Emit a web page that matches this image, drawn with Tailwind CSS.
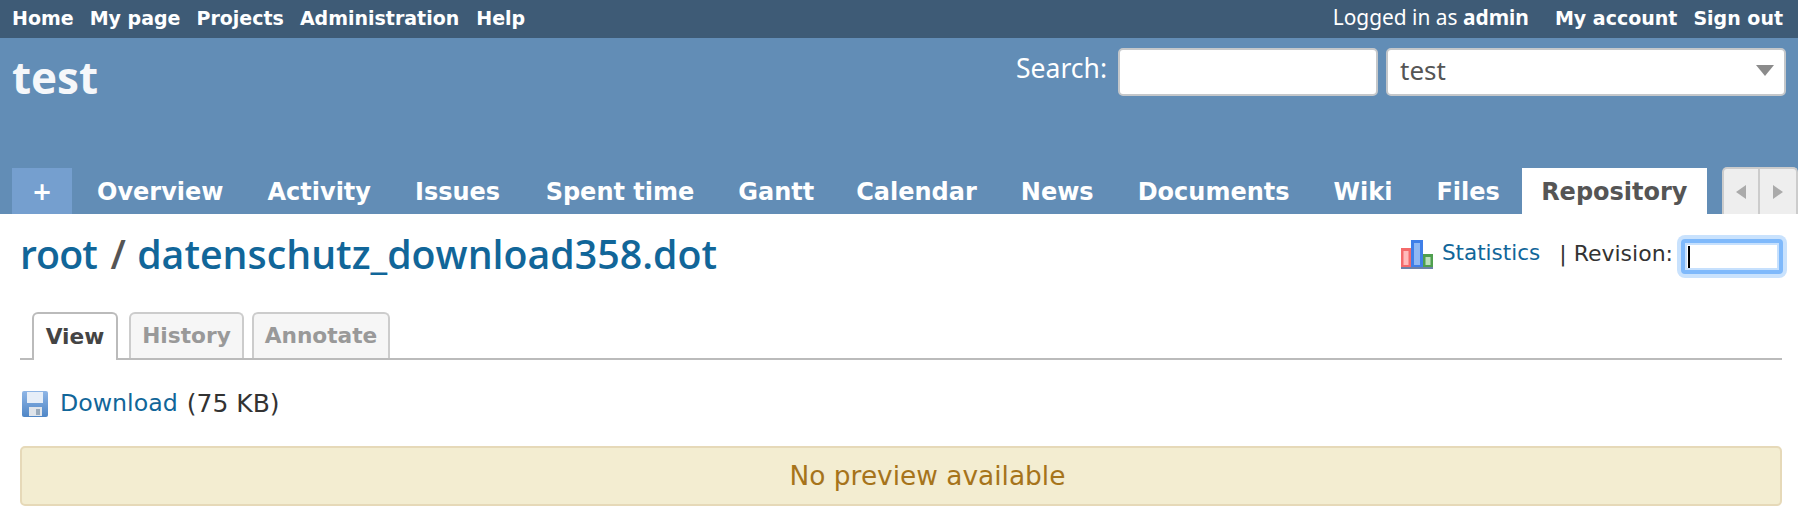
<!DOCTYPE html>
<html><head><meta charset="utf-8"><script src="https://cdn.jsdelivr.net/npm/@tailwindcss/browser@4"></script></head>
<body class="bg-white font-['DejaVu_Sans',sans-serif] overflow-hidden">
<div class="w-[1798px] h-[524px] flex flex-col overflow-hidden">
  <div class="h-[38px] bg-[#3e5b76] text-white flex items-center justify-between pl-[12px] pr-[15px] pb-[2px] text-[19px] font-bold">
    <div class="flex gap-[16px]"><span>Home</span><span>My page</span><span>Projects</span><span>Administration</span><span class="ml-[1px]">Help</span></div>
    <div class="flex items-center"><span class="font-['Noto_Sans',sans-serif] font-normal text-[20.9px] mr-[26px]">Logged in as <b>admin</b></span><span class="mr-[16px]">My account</span><span>Sign out</span></div>
  </div>
  <div class="h-[176px] bg-[#628db6] flex flex-col justify-between relative">
    <div class="flex justify-between items-start pl-[12px] pr-[12px] pt-[10px]">
      <div class="font-['Open_Sans',sans-serif] font-bold text-[44px] leading-[52px] text-[#f5f7fa] pt-[3px]">test</div>
      <div class="flex items-center">
        <span class="font-['Noto_Sans',sans-serif] text-[26.5px] text-white mr-[11px] mb-[6px]">Search:</span>
        <div class="w-[260px] h-[48px] bg-white rounded-[5px] border-2 border-[#c4c7ca] mr-[8px]"></div>
        <div class="w-[400px] h-[48px] bg-white rounded-[5px] border-2 border-[#c4c7ca] flex items-center justify-between pl-[12px] pr-[9px] font-['Noto_Sans',sans-serif] text-[26px] text-[#555]"><span class="mb-[3px]">test</span>
          <svg width="20" height="13" viewBox="0 0 20 13" class="mb-[3px]"><path d="M1 1H19L10 12Z" fill="#8b8b8b"/></svg>
        </div>
      </div>
    </div>
    <div class="flex items-end pl-[12px] h-[48px] font-bold text-[24px] text-white whitespace-nowrap">
      <div class="w-[60px] shrink-0 h-[46px] bg-[#759fcf] flex items-center justify-center mr-[3px] pt-[2px]">+</div>
      <div class="h-[46px] shrink-0 flex items-center px-[22px] pt-[2px]">Overview</div>
      <div class="h-[46px] shrink-0 flex items-center px-[22px] pt-[2px]">Activity</div>
      <div class="h-[46px] shrink-0 flex items-center pl-[22px] pr-[23.5px] pt-[2px]">Issues</div>
      <div class="h-[46px] shrink-0 flex items-center px-[22px] pt-[2px]">Spent time</div>
      <div class="h-[46px] shrink-0 flex items-center pl-[22px] pr-[20px] pt-[2px]">Gantt</div>
      <div class="h-[46px] shrink-0 flex items-center px-[22px] pt-[2px]">Calendar</div>
      <div class="h-[46px] shrink-0 flex items-center px-[22px] pt-[2px]">News</div>
      <div class="h-[46px] shrink-0 flex items-center px-[22px] pt-[2px]">Documents</div>
      <div class="h-[46px] shrink-0 flex items-center px-[22px] pt-[2px]">Wiki</div>
      <div class="h-[46px] shrink-0 flex items-center px-[22px] pt-[2px]">Files</div>
      <div class="h-[46px] w-[185px] shrink-0 flex items-center justify-center bg-white text-[#555] pt-[2px]">Repository</div>
      <div class="ml-[15px] w-[76px] shrink-0 h-[47px] flex border-2 border-b-0 border-[#ccc] rounded-t-[5px] bg-[#eee]">
        <div class="w-[36px] flex items-center justify-center border-r-2 border-[#ccc]"><svg width="12" height="16" viewBox="0 0 12 16"><path d="M11 1V15L1 8Z" fill="#aaa"/></svg></div>
        <div class="flex-1 flex items-center justify-center"><svg width="12" height="16" viewBox="0 0 12 16"><path d="M1 1V15L11 8Z" fill="#aaa"/></svg></div>
      </div>
    </div>
  </div>
  <div class="flex-1 pl-[20px] pr-[16px] text-[23.7px] text-[#333]">
    <div class="h-[60px] pt-[14px] flex justify-between items-start">
      <div class="font-['Open_Sans',sans-serif] font-semibold text-[39.3px] leading-[52px] text-[#555]"><span class="text-[#169] tracking-[-0.9px]">root</span><span class="ml-[3.5px]"> / </span><span class="text-[#169] ml-[1px]">datenschutz_download358.dot</span></div>
      <div class="flex items-center pt-[9px] text-[21.5px]">
        <svg width="34" height="32" viewBox="0 0 34 32" class="mr-[8px] mb-[5px]"><rect x="1" y="10" width="10" height="19" fill="#f46a6a"/><rect x="3.5" y="13" width="5" height="14" fill="#fbb"/><rect x="11" y="2" width="12" height="27" fill="#3f7fe8"/><rect x="14" y="5" width="6" height="22" fill="#8fb8f4"/><rect x="23" y="16" width="10" height="13" fill="#4f9f4f"/><rect x="25.5" y="19" width="5" height="8" fill="#bde0bd"/><rect x="1" y="29" width="32" height="2" fill="#6c82a8"/></svg>
        <a class="text-[#169] mr-[19px] mb-[6px]">Statistics</a><span class="text-[#333] text-[22px] mb-[6px]">| Revision:</span>
        <div class="ml-[8px] mr-[-1px] w-[102px] h-[35px] border-[4px] border-[#7fb9fb] ring-[4px] ring-[#c9e2fd] rounded-[4px] bg-white flex items-center pl-[3px] shadow-[inset_0_0_0_2px_#c6e0fd]"><div class="w-[2px] h-[22px] bg-black"></div></div>
      </div>
    </div>
    <div class="mt-[38px] h-[48px] border-b-2 border-[#bbb] flex items-end pl-[12px] font-bold text-[21.7px] text-[#999]">
      <div class="w-[86px] h-[48px] mb-[-2px] mr-[11px] border-2 border-b-0 border-[#bbb] rounded-t-[6px] bg-white text-[#444] flex items-center justify-center">View</div>
      <div class="w-[115px] h-[46px] mr-[8px] border-2 border-b-0 border-[#ccc] rounded-t-[6px] bg-[#f6f6f6] flex items-center justify-center">History</div>
      <div class="w-[138px] h-[46px] border-2 border-b-0 border-[#ccc] rounded-t-[6px] bg-[#f6f6f6] flex items-center justify-center">Annotate</div>
    </div>
    <div class="mt-[29px] flex items-center h-[30px]">
      <svg width="26" height="28" viewBox="0 0 26 28" class="ml-[2px] mr-[12px]"><defs><linearGradient id="g" x1="0" y1="0" x2="0" y2="1"><stop offset="0" stop-color="#8fb6e6"/><stop offset="1" stop-color="#4f86c6"/></linearGradient></defs><rect x="0" y="1" width="26" height="26" rx="2" fill="url(#g)"/><rect x="5" y="2" width="16" height="11" fill="#e6eef8"/><rect x="7" y="17" width="13" height="9" fill="#dfe4ea"/><rect x="14" y="19" width="4" height="6" fill="#9ab"/></svg>
      <span class="text-[#169]">Download</span><span class="ml-[9px] text-[25px]">(75 KB)</span>
    </div>
    <div class="mt-[27px] h-[60px] bg-[#f3edd1] border-2 border-[#e6d9b8] rounded-[5px] flex items-center justify-center pl-[53px] text-[#a6741b] text-[26.4px]">No preview available</div>
  </div>
</div>
</body></html>
